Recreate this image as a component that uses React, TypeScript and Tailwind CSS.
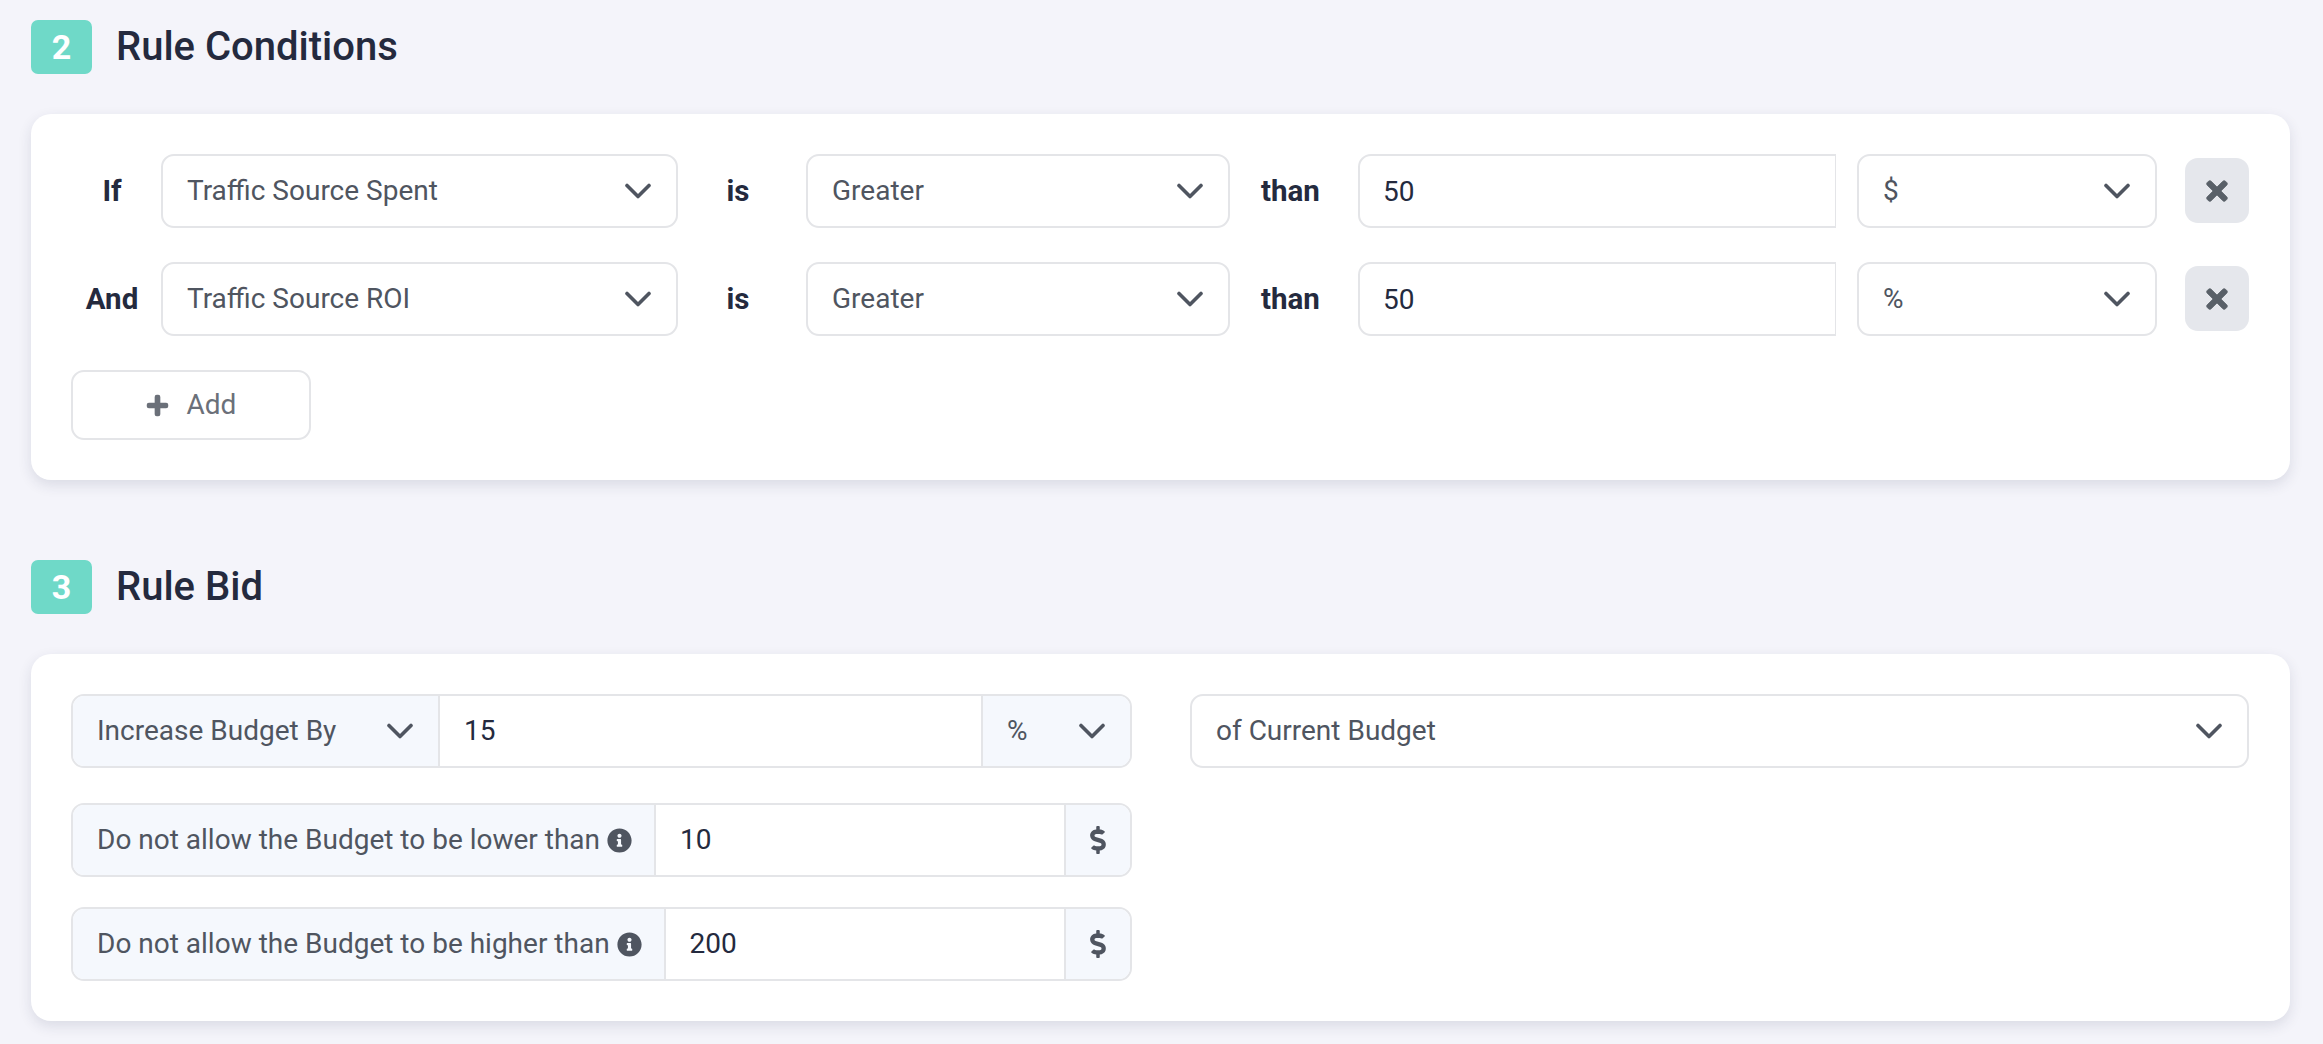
import React from "react";
import { FaTimes, FaPlus, FaInfoCircle, FaDollarSign } from "react-icons/fa";

function Chevron() {
  return (
    <svg width="26" height="16" viewBox="0 0 26 16" fill="none" className="flex-none text-[#4f5560]">
      <path d="M2 2.5 L13 13.5 L24 2.5" stroke="currentColor" strokeWidth="3.6" strokeLinecap="round" strokeLinejoin="round" />
    </svg>
  );
}

function Select({ label, width }: { label: string; width: string }) {
  return (
    <div className={`${width} h-[74px] flex-none flex items-center justify-between rounded-[13px] border-2 border-[#e4e5e8] bg-white pl-[24px] pr-[25px] text-[28px] text-[#4f5560]`}>
      <span>{label}</span>
      <Chevron />
    </div>
  );
}

function Word({ children, width, className = "" }: { children: React.ReactNode; width: string; className?: string }) {
  return (
    <div className={`${width} flex-none text-center text-[29.5px] font-bold text-[#242a3e] ${className}`}>{children}</div>
  );
}

function Condition({ lead, metric, unit }: { lead: string; metric: string; unit: string }) {
  return (
    <div className="flex h-[74px] items-center">
      <Word width="w-[90px]" className="pr-[8px]">{lead}</Word>
      <Select label={metric} width="w-[517px]" />
      <Word width="w-[128px]" className="pr-[8px]">is</Word>
      <Select label="Greater" width="w-[424px]" />
      <Word width="w-[128px]" className="pr-[7px]">than</Word>
      <input
        readOnly
        value="50"
        className="h-[74px] w-[478px] flex-none rounded-l-[13px] border-2 border-r border-[#e4e5e8] bg-white pl-[23px] text-[28px] text-[#242a3e] outline-none"
      />
      <div className="ml-[21px]">
        <Select label={unit} width="w-[300px]" />
      </div>
      <button className="mb-[1px] ml-[28px] flex h-[65px] w-[64px] flex-none items-center justify-center rounded-[13px] bg-[#e5e7ec] text-[#596068]">
        <FaTimes size={30} stroke="currentColor" strokeWidth={14} />
      </button>
    </div>
  );
}

function Heading({ n, title }: { n: number; title: string }) {
  return (
    <div className="mb-[40px] flex h-[54px] items-center">
      <div className="flex h-[54px] w-[61px] items-center justify-center rounded-[7px] bg-[#6fd9c8] text-[34px] font-bold leading-none text-white">{n}</div>
      <h2 className="ml-[24px] text-[40px] font-medium leading-none text-[#242a3e]">{title}</h2>
    </div>
  );
}

function Limit({ label, value }: { label: string; value: string }) {
  return (
    <div className="flex h-[74px] w-[1061px] overflow-hidden rounded-[13px] border-2 border-[#e4e5e8] bg-white text-[28px]">
      <div className="flex flex-none items-center gap-[7px] border-r-2 border-[#e4e5e8] bg-[#f5f8fd] pl-[24px] pr-[22px] text-[#4f5560]">
        <span>{label}</span>
        <FaInfoCircle size={25} className="flex-none text-[#4f5560]" />
      </div>
      <input readOnly value={value} className="min-w-0 flex-1 bg-white pl-[24px] text-[#242a3e] outline-none" />
      <div className="flex w-[66px] flex-none items-center justify-center border-l-2 border-[#e4e5e8] bg-[#f5f8fd] text-[#4f5560]">
        <FaDollarSign size={28} />
      </div>
    </div>
  );
}

export default function App() {
  return (
    <div className="min-h-[1044px] bg-[#f4f4fa] px-[31px] pt-[20px] font-['Roboto',sans-serif]">
      <Heading n={2} title="Rule Conditions" />
      <section className="mb-[80px] flex w-[2259px] flex-col gap-[34px] rounded-[20px] bg-white pb-[40px] pl-[40px] pr-[41px] pt-[40px] shadow-[0_5px_14px_rgba(35,40,70,0.12)]">
        <Condition lead="If" metric="Traffic Source Spent" unit="$" />
        <Condition lead="And" metric="Traffic Source ROI" unit="%" />
        <button className="flex h-[70px] w-[240px] items-center justify-center gap-[18px] rounded-[13px] border-2 border-[#e4e5e8] bg-white text-[28px] text-[#6b7079]">
          <FaPlus size={23} stroke="currentColor" strokeWidth={30} />
          <span>Add</span>
        </button>
      </section>

      <Heading n={3} title="Rule Bid" />
      <section className="flex w-[2259px] gap-[58px] rounded-[20px] bg-white pb-[40px] pl-[40px] pr-[41px] pt-[40px] shadow-[0_5px_14px_rgba(35,40,70,0.12)]">
        <div className="flex flex-col">
          <div className="flex h-[74px] w-[1061px] overflow-hidden rounded-[13px] border-2 border-[#e4e5e8] bg-white text-[28px]">
            <div className="flex w-[367px] flex-none items-center justify-between border-r-2 border-[#e4e5e8] bg-[#f5f8fd] pl-[24px] pr-[25px] text-[#4f5560]">
              <span>Increase Budget By</span>
              <Chevron />
            </div>
            <input readOnly value="15" className="min-w-0 flex-1 bg-white pl-[24px] text-[#242a3e] outline-none" />
            <div className="flex w-[149px] flex-none items-center justify-between border-l-2 border-[#e4e5e8] bg-[#f5f8fd] pl-[24px] pr-[25px] text-[#4f5560]">
              <span>%</span>
              <Chevron />
            </div>
          </div>
          <div className="mt-[35px]">
            <Limit label="Do not allow the Budget to be lower than" value="10" />
          </div>
          <div className="mt-[30px]">
            <Limit label="Do not allow the Budget to be higher than" value="200" />
          </div>
        </div>
        <Select label="of Current Budget" width="w-[1059px]" />
      </section>
    </div>
  );
}
